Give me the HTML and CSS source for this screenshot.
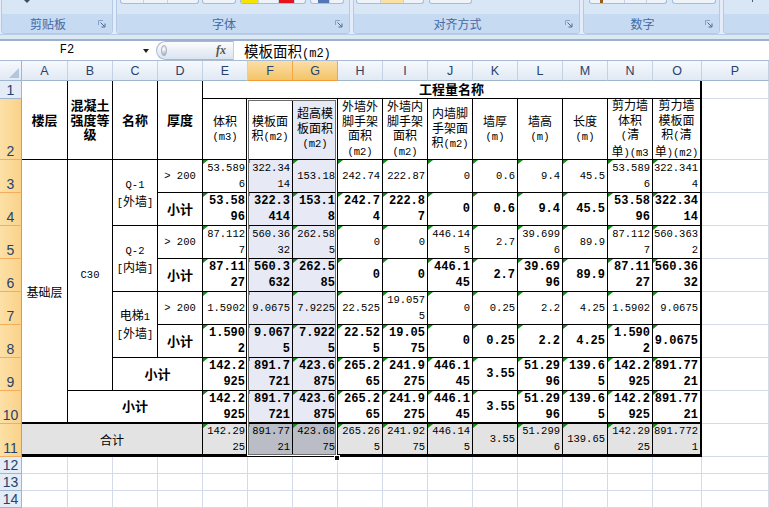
FILE: index.html
```html
<!DOCTYPE html>
<html lang="zh-CN">
<head>
<meta charset="utf-8">
<title>Sheet</title>
<link rel="stylesheet" href="styles.css">
</head>
<body>
<div class="ribbon">
  <div class="group g1">
    <div class="tops"><span class="tri"></span></div>
    <div class="band"><span class="glabel">剪贴板</span><span class="launch"><svg width="8" height="8" viewBox="0 0 8 8"><path d="M0.5 5V0.5H5" fill="none" stroke="#8aa2c4"/><path d="M2.5 2.5L6.5 6.5M7 3.5V7H3.5" fill="none" stroke="#4d6b98"/></svg></span></div>
  </div>
  <div class="group g2">
    <div class="tops">
      <span class="pc a1"><i class="w22"></i><i class="w24"></i><i></i></span>
      <span class="pc a2"><i></i></span>
      <span class="pc a3"><i class="yel"></i><i class="w20"></i><i class="red"></i><i></i></span>
      <span class="pc a4"><i class="w7"></i><i class="blu"></i><i></i></span>
    </div>
    <div class="band"><span class="glabel">字体</span><span class="launch"><svg width="8" height="8" viewBox="0 0 8 8"><path d="M0.5 5V0.5H5" fill="none" stroke="#8aa2c4"/><path d="M2.5 2.5L6.5 6.5M7 3.5V7H3.5" fill="none" stroke="#4d6b98"/></svg></span></div>
  </div>
  <div class="group g3">
    <div class="tops">
      <span class="pc b1"><i class="w23"></i><i class="org"></i><i></i></span>
      <span class="pc b2"><i></i></span>
    </div>
    <div class="band"><span class="glabel">对齐方式</span><span class="launch"><svg width="8" height="8" viewBox="0 0 8 8"><path d="M0.5 5V0.5H5" fill="none" stroke="#8aa2c4"/><path d="M2.5 2.5L6.5 6.5M7 3.5V7H3.5" fill="none" stroke="#4d6b98"/></svg></span></div>
  </div>
  <div class="group g4">
    <div class="tops">
      <span class="pc d1"><i class="w34"><b class="brn"></b></i><i class="w22"></i><i></i></span>
      <span class="pc d2"><i></i></span>
    </div>
    <div class="band"><span class="glabel">数字</span><span class="launch"><svg width="8" height="8" viewBox="0 0 8 8"><path d="M0.5 5V0.5H5" fill="none" stroke="#8aa2c4"/><path d="M2.5 2.5L6.5 6.5M7 3.5V7H3.5" fill="none" stroke="#4d6b98"/></svg></span></div>
  </div>
  <div class="group g5">
    <div class="tops"><span class="dot"></span></div>
    <div class="band"></div>
  </div>
</div>
<div class="sepband"></div>
<div class="fbar">
  <div class="namebox"><span class="nbtext">F2</span><span class="dd"></span></div>
  <div class="pill"><span class="bead"></span><span class="fx">fx</span></div>
  <div class="ftext">模板面积<span class="fu">(m2)</span></div>
</div>

<div class="sheet">
  <div class="ch corner"><svg width="10" height="10" viewBox="0 0 10 10"><polygon points="10,0 10,10 0,10" fill="#b4c6dc"/></svg></div>
  <div class="ch">A</div><div class="ch">B</div><div class="ch">C</div><div class="ch">D</div><div class="ch">E</div>
  <div class="ch on">F</div><div class="ch on">G</div>
  <div class="ch">H</div><div class="ch">I</div><div class="ch">J</div><div class="ch">K</div><div class="ch">L</div><div class="ch">M</div><div class="ch">N</div><div class="ch">O</div><div class="ch">P</div>

  <!-- row 1 -->
  <div class="rh">1</div>
  <div class="c hb rs2"><span class="in">楼层</span></div>
  <div class="c hb rs2"><span class="in">混凝土<br>强度等<br>级</span></div>
  <div class="c hb rs2"><span class="in">名称</span></div>
  <div class="c hb rs2"><span class="in">厚度</span></div>
  <div class="c hb cs11 lastc"><span class="in">工程量名称</span></div>
  <div class="g"></div>

  <!-- row 2 -->
  <div class="rh on">2</div>
  <div class="c h"><span class="in">体积<br><span class="u">(m3)</span></span></div>
  <div class="c h"><span class="in">模板面<br>积<span class="u">(m2)</span></span></div>
  <div class="c h s"><span class="in">超高模<br>板面积<br><span class="u">(m2)</span></span></div>
  <div class="c h"><span class="in">外墙外<br>脚手架<br>面积<br><span class="u">(m2)</span></span></div>
  <div class="c h"><span class="in">外墙内<br>脚手架<br>面积<br><span class="u">(m2)</span></span></div>
  <div class="c h"><span class="in">内墙脚<br>手架面<br>积<span class="u">(m2)</span></span></div>
  <div class="c h"><span class="in">墙厚<br><span class="u">(m)</span></span></div>
  <div class="c h"><span class="in">墙高<br><span class="u">(m)</span></span></div>
  <div class="c h"><span class="in">长度<br><span class="u">(m)</span></span></div>
  <div class="c h"><span class="in">剪力墙<br>体积<br><span class="u">(</span>清<br>单<span class="u">)(m3</span></span></div>
  <div class="c h lastc"><span class="in">剪力墙<br>模板面<br>积<span class="u">(</span>清<br>单<span class="u">)(m2)</span></span></div>
  <div class="g"></div>

  <!-- row 3 -->
  <div class="rh on">3</div>
  <div class="c lbl rs8 r10"><span class="in">基础层</span></div>
  <div class="c lat rs7"><span class="in">C30</span></div>
  <div class="c lbl rs2"><span class="in"><span class="u">Q-1</span><br><span class="u">[</span>外墙<span class="u">]</span></span></div>
  <div class="c lat"><span class="in">&gt; 200</span></div>
  <div class="c n"><span class="in">53.589<br>6</span></div>
  <div class="c n s f"><span class="in">322.34<br>14</span></div>
  <div class="c n s"><span class="in">153.18</span></div>
  <div class="c n"><span class="in">242.74</span></div>
  <div class="c n"><span class="in">222.87</span></div>
  <div class="c n"><span class="in">0</span></div>
  <div class="c n"><span class="in">0.6</span></div>
  <div class="c n"><span class="in">9.4</span></div>
  <div class="c n"><span class="in">45.5</span></div>
  <div class="c n"><span class="in">53.589<br>6</span></div>
  <div class="c n lastc"><span class="in">322.341<br>4</span></div>
  <div class="g"></div>

  <!-- row 4 -->
  <div class="rh on">4</div>
  <div class="c hb"><span class="in">小计</span></div>
  <div class="c nb"><span class="in">53.58<br>96</span></div>
  <div class="c nb s f"><span class="in">322.3<br>414</span></div>
  <div class="c nb s"><span class="in">153.1<br>8</span></div>
  <div class="c nb"><span class="in">242.7<br>4</span></div>
  <div class="c nb"><span class="in">222.8<br>7</span></div>
  <div class="c nb"><span class="in">0</span></div>
  <div class="c nb"><span class="in">0.6</span></div>
  <div class="c nb"><span class="in">9.4</span></div>
  <div class="c nb"><span class="in">45.5</span></div>
  <div class="c nb"><span class="in">53.58<br>96</span></div>
  <div class="c nb lastc"><span class="in">322.34<br>14</span></div>
  <div class="g"></div>

  <!-- row 5 -->
  <div class="rh on">5</div>
  <div class="c lbl rs2"><span class="in"><span class="u">Q-2</span><br><span class="u">[</span>内墙<span class="u">]</span></span></div>
  <div class="c lat"><span class="in">&gt; 200</span></div>
  <div class="c n"><span class="in">87.112<br>7</span></div>
  <div class="c n s f"><span class="in">560.36<br>32</span></div>
  <div class="c n s"><span class="in">262.58<br>5</span></div>
  <div class="c n"><span class="in">0</span></div>
  <div class="c n"><span class="in">0</span></div>
  <div class="c n"><span class="in">446.14<br>5</span></div>
  <div class="c n"><span class="in">2.7</span></div>
  <div class="c n"><span class="in">39.699<br>6</span></div>
  <div class="c n"><span class="in">89.9</span></div>
  <div class="c n"><span class="in">87.112<br>7</span></div>
  <div class="c n lastc"><span class="in">560.363<br>2</span></div>
  <div class="g"></div>

  <!-- row 6 -->
  <div class="rh on">6</div>
  <div class="c hb"><span class="in">小计</span></div>
  <div class="c nb"><span class="in">87.11<br>27</span></div>
  <div class="c nb s f"><span class="in">560.3<br>632</span></div>
  <div class="c nb s"><span class="in">262.5<br>85</span></div>
  <div class="c nb"><span class="in">0</span></div>
  <div class="c nb"><span class="in">0</span></div>
  <div class="c nb"><span class="in">446.1<br>45</span></div>
  <div class="c nb"><span class="in">2.7</span></div>
  <div class="c nb"><span class="in">39.69<br>96</span></div>
  <div class="c nb"><span class="in">89.9</span></div>
  <div class="c nb"><span class="in">87.11<br>27</span></div>
  <div class="c nb lastc"><span class="in">560.36<br>32</span></div>
  <div class="g"></div>

  <!-- row 7 -->
  <div class="rh on">7</div>
  <div class="c lbl rs2"><span class="in">电梯<span class="u">1</span><br><span class="u">[</span>外墙<span class="u">]</span></span></div>
  <div class="c lat"><span class="in">&gt; 200</span></div>
  <div class="c n"><span class="in">1.5902</span></div>
  <div class="c n s f"><span class="in">9.0675</span></div>
  <div class="c n s"><span class="in">7.9225</span></div>
  <div class="c n"><span class="in">22.525</span></div>
  <div class="c n"><span class="in">19.057<br>5</span></div>
  <div class="c n"><span class="in">0</span></div>
  <div class="c n"><span class="in">0.25</span></div>
  <div class="c n"><span class="in">2.2</span></div>
  <div class="c n"><span class="in">4.25</span></div>
  <div class="c n"><span class="in">1.5902</span></div>
  <div class="c n lastc"><span class="in">9.0675</span></div>
  <div class="g"></div>

  <!-- row 8 -->
  <div class="rh on">8</div>
  <div class="c hb"><span class="in">小计</span></div>
  <div class="c nb"><span class="in">1.590<br>2</span></div>
  <div class="c nb s f"><span class="in">9.067<br>5</span></div>
  <div class="c nb s"><span class="in">7.922<br>5</span></div>
  <div class="c nb"><span class="in">22.52<br>5</span></div>
  <div class="c nb"><span class="in">19.05<br>75</span></div>
  <div class="c nb"><span class="in">0</span></div>
  <div class="c nb"><span class="in">0.25</span></div>
  <div class="c nb"><span class="in">2.2</span></div>
  <div class="c nb"><span class="in">4.25</span></div>
  <div class="c nb"><span class="in">1.590<br>2</span></div>
  <div class="c nb lastc"><span class="in">9.0675</span></div>
  <div class="g"></div>

  <!-- row 9 -->
  <div class="rh on">9</div>
  <div class="c hb cs2"><span class="in">小计</span></div>
  <div class="c nb"><span class="in">142.2<br>925</span></div>
  <div class="c nb s f"><span class="in">891.7<br>721</span></div>
  <div class="c nb s"><span class="in">423.6<br>875</span></div>
  <div class="c nb"><span class="in">265.2<br>65</span></div>
  <div class="c nb"><span class="in">241.9<br>275</span></div>
  <div class="c nb"><span class="in">446.1<br>45</span></div>
  <div class="c nb"><span class="in">3.55</span></div>
  <div class="c nb"><span class="in">51.29<br>96</span></div>
  <div class="c nb"><span class="in">139.6<br>5</span></div>
  <div class="c nb"><span class="in">142.2<br>925</span></div>
  <div class="c nb lastc"><span class="in">891.77<br>21</span></div>
  <div class="g"></div>

  <!-- row 10 -->
  <div class="rh on">10</div>
  <div class="c hb cs3 r10"><span class="in">小计</span></div>
  <div class="c nb r10"><span class="in">142.2<br>925</span></div>
  <div class="c nb r10 s f"><span class="in">891.7<br>721</span></div>
  <div class="c nb r10 s"><span class="in">423.6<br>875</span></div>
  <div class="c nb r10"><span class="in">265.2<br>65</span></div>
  <div class="c nb r10"><span class="in">241.9<br>275</span></div>
  <div class="c nb r10"><span class="in">446.1<br>45</span></div>
  <div class="c nb r10"><span class="in">3.55</span></div>
  <div class="c nb r10"><span class="in">51.29<br>96</span></div>
  <div class="c nb r10"><span class="in">139.6<br>5</span></div>
  <div class="c nb r10"><span class="in">142.2<br>925</span></div>
  <div class="c nb r10 lastc"><span class="in">891.77<br>21</span></div>
  <div class="g"></div>

  <!-- row 11 -->
  <div class="rh on">11</div>
  <div class="c lbl cs4 tot"><span class="in">合计</span></div>
  <div class="c n tot"><span class="in">142.29<br>25</span></div>
  <div class="c n tot s f"><span class="in">891.77<br>21</span></div>
  <div class="c n tot s"><span class="in">423.68<br>75</span></div>
  <div class="c n tot"><span class="in">265.26<br>5</span></div>
  <div class="c n tot"><span class="in">241.92<br>75</span></div>
  <div class="c n tot"><span class="in">446.14<br>5</span></div>
  <div class="c n tot"><span class="in">3.55</span></div>
  <div class="c n tot"><span class="in">51.299<br>6</span></div>
  <div class="c n tot"><span class="in">139.65</span></div>
  <div class="c n tot"><span class="in">142.29<br>25</span></div>
  <div class="c n tot lastc"><span class="in">891.772<br>1</span></div>
  <div class="g"></div>

  <!-- rows 12-14 -->
  <div class="rh">12</div>
  <div class="g"></div><div class="g"></div><div class="g"></div><div class="g"></div><div class="g"></div><div class="g"></div><div class="g"></div><div class="g"></div>
  <div class="g"></div><div class="g"></div><div class="g"></div><div class="g"></div><div class="g"></div><div class="g"></div><div class="g"></div><div class="g"></div>
  <div class="rh">13</div>
  <div class="g"></div><div class="g"></div><div class="g"></div><div class="g"></div><div class="g"></div><div class="g"></div><div class="g"></div><div class="g"></div>
  <div class="g"></div><div class="g"></div><div class="g"></div><div class="g"></div><div class="g"></div><div class="g"></div><div class="g"></div><div class="g"></div>
  <div class="rh">14</div>
  <div class="g"></div><div class="g"></div><div class="g"></div><div class="g"></div><div class="g"></div><div class="g"></div><div class="g"></div><div class="g"></div>
  <div class="g"></div><div class="g"></div><div class="g"></div><div class="g"></div><div class="g"></div><div class="g"></div><div class="g"></div><div class="g"></div>

  <div class="selbox"></div>
  <div class="handle"></div>
</div>
</body>
</html>
```

FILE: styles.css
```css
* { box-sizing: border-box; }
html, body { margin: 0; padding: 0; }
body {
  width: 769px;
  height: 508px;
  overflow: hidden;
  background: #fff;
  font-family: "Noto Sans CJK SC", sans-serif;
  color: #000;
}

/* ---------- ribbon ---------- */
.ribbon {
  height: 35px;
  display: flex;
  gap: 3px;
  padding-left: 1px;
  background: #e3ecf8;
  border-bottom: 1px solid #b9cde7;
}
.group {
  display: flex;
  flex-direction: column;
  border: 1px solid #b3c9e5;
  border-top: 0;
  border-radius: 0 0 4px 4px;
  background: #d9e6f6;
  overflow: hidden;
}
.g1 { width: 112px; }
.g2 { width: 234px; }
.g3 { width: 227px; }
.g4 { width: 137px; }
.g5 { flex: 1; border-right: 0; border-radius: 0 0 0 4px; }
.tops { height: 14px; display: flex; align-items: flex-start; }
.band {
  height: 19px;
  display: flex;
  align-items: center;
  background: #c6daf1;
}
.glabel {
  flex: 1;
  text-align: center;
  font-size: 12px;
  line-height: 19px;
  color: #4569a6;
}
.launch { width: 18px; padding-left: 4px; display: flex; align-items: center; }
.tri {
  margin-left: 22px;
  width: 0; height: 0;
  border-top: 3px solid #3b4c66;
  border-left: 3px solid transparent;
  border-right: 3px solid transparent;
}
.pc {
  height: 4px;
  display: flex;
  border: 1px solid #a5bcda;
  border-top: 0;
  border-radius: 0 0 3px 3px;
  background: #eef3fa;
  overflow: hidden;
}
.pc i { flex: 1; border-left: 1px solid #c3d3e8; }
.pc i:first-child { border-left: 0; }
.pc i.w7 { flex: 0 0 7px; }
.pc i.w20 { flex: 0 0 20px; }
.pc i.w22 { flex: 0 0 22px; }
.pc i.w23 { flex: 0 0 23px; }
.pc i.w24 { flex: 0 0 24px; }
.pc i.w34 { flex: 0 0 34px; }
.pc i.yel { flex: 0 0 17px; background: #f6e400; }
.pc i.red { flex: 0 0 16px; background: #e5141b; }
.pc i.blu { flex: 0 0 11px; background: #5276b6; border-left: 0; }
.pc i.org { flex: 0 0 23px; background: #fbe2a4; }
.pc i b.brn { display: block; margin-left: 10px; width: 3px; height: 3px; background: #9a5a1c; }
.a1 { margin-left: 3px; width: 79px; }
.a2 { margin-left: 3px; width: 34px; }
.a3 { margin-left: 4px; width: 66px; }
.a4 { margin-left: 4px; width: 34px; }
.b1 { margin-left: 2px; width: 68px; }
.b2 { margin-left: 5px; width: 43px; }
.d1 { margin-left: 5px; width: 78px; }
.d2 { margin-left: 5px; width: 44px; }
.dot { margin-left: 28px; width: 1px; height: 2px; background: #4b5a70; }

.sepband { height: 4px; background: #dde8f5; }

/* ---------- formula bar ---------- */
.fbar {
  height: 22px;
  display: flex;
  background: #fff;
  border-top: 2px solid #9bb1cd;
  border-bottom: 1px solid #a9bcd4;
}
.namebox { width: 156px; display: flex; align-items: center; }
.nbtext {
  width: 134px;
  text-align: center;
  font-family: "Liberation Mono", monospace;
  font-size: 12px;
  line-height: 19px;
}
.dd {
  margin-left: 9px;
  width: 0; height: 0;
  border-top: 4px solid #222;
  border-left: 3px solid transparent;
  border-right: 3px solid transparent;
}
.pill {
  width: 78px;
  height: 19px;
  display: flex;
  align-items: center;
  justify-content: space-between;
  padding: 0 7px 0 4px;
  border: 1px solid #a7b9d1;
  border-right-color: #c3cfdf;
  border-radius: 10px 0 0 10px;
  background: linear-gradient(#fbfcfe, #dbe4f0);
}
.bead {
  width: 6px;
  height: 11px;
  border-radius: 50%;
  background: radial-gradient(circle at 40% 35%, #ffffff, #9aa7b8);
  border: 1px solid #a9b4c3;
}
.fx {
  font-family: "Liberation Serif", serif;
  font-style: italic;
  font-weight: 700;
  font-size: 12px;
  color: #555;
}
.ftext {
  flex: 1;
  padding-left: 10px;
  font-size: 14.5px;
  line-height: 19px;
}
.fu { font-family: "Liberation Mono", monospace; font-size: 12px; }

/* ---------- sheet ---------- */
.sheet {
  position: relative;
  display: grid;
  grid-template-columns: 22px 46px repeat(13, 45px) 49px 67px;
  grid-template-rows: 20px 18px 61px repeat(9, 33px) repeat(3, 17px);
}
.ch {
  display: flex;
  align-items: center;
  justify-content: center;
  font-family: "Liberation Sans", Arial, sans-serif;
  font-size: 12.5px;
  color: #27426b;
  background: linear-gradient(#f6f9fd, #e1e9f4);
  border-right: 1px solid #c2d1e4;
  border-bottom: 1px solid #9eb6ce;
}
.ch.on {
  background: linear-gradient(#fbdfa6, #f3c469);
  border-right-color: #f2a746;
  border-bottom-color: #f29a36;
}
.corner { justify-content: flex-end; align-items: flex-end; padding: 0 2px 2px 0; border-right-color: #9eb6ce; }
.rh {
  display: flex;
  align-items: flex-end;
  justify-content: center;
  padding-bottom: 1px;
  font-family: "Liberation Sans", Arial, sans-serif;
  font-size: 14px;
  line-height: 14px;
  color: #27426b;
  background: #e4ecf7;
  border-right: 1px solid #9eb6ce;
  border-bottom: 1px solid #9eb6ce;
}
.rh.on {
  background: linear-gradient(90deg, #fde0a6, #f9d28a);
  border-right-color: #f29436;
  border-bottom-color: #f3ad5c;
}
.g {
  border-right: 1px solid #d3dbe8;
  border-bottom: 1px solid #d3dbe8;
}
.c {
  position: relative;
  display: flex;
  align-items: center;
  justify-content: center;
  text-align: center;
  overflow: hidden;
  background: #fff;
  border-right: 1px solid #000;
  border-bottom: 1px solid #000;
}
.in { display: block; white-space: nowrap; }
.rs2 { grid-row: span 2; }
.rs7 { grid-row: span 7; }
.rs8 { grid-row: span 8; }
.cs2 { grid-column: span 2; }
.cs3 { grid-column: span 3; }
.cs4 { grid-column: span 4; }
.cs11 { grid-column: span 11; }
.lastc { border-right-width: 2px; }
.r10 { border-bottom-width: 2px; }
.tot { background: #e3e3e3; border-bottom-width: 3px; }
.s { background: #e7e9f4; }
.s.tot { background: #babdc6; }

.hb { font-size: 13px; font-weight: 700; line-height: 14.5px; }
.h { font-size: 12px; line-height: 14.5px; }
.lbl { font-size: 12px; line-height: 15px; }
.lat { font-family: "Liberation Mono", monospace; font-size: 10.5px; }
.u { font-family: "Liberation Mono", monospace; font-size: 10.5px; }

.n, .nb {
  justify-content: flex-end;
  text-align: right;
  padding-right: 2px;
  font-family: "Liberation Mono", monospace;
  line-height: 16px;
}
.n { font-size: 10.5px; }
.nb { font-size: 12px; font-weight: 700; }
.n::before, .nb::before {
  content: "";
  position: absolute;
  left: 0;
  top: 0;
  width: 0;
  height: 0;
  border-top: 4px solid #13891a;
  border-right: 5px solid transparent;
}
.f::before {
  left: 1px;
  width: 1px;
  height: 3px;
  border: 0;
  background: #d95ad9;
}

.selbox {
  position: absolute;
  left: 246px;
  top: 37px;
  width: 92px;
  height: 359px;
  border: 1px solid #000;
  box-shadow: inset 0 0 0 1px #fff, inset 0 0 0 2px #6e6e6e;
}
.handle {
  position: absolute;
  left: 334px;
  top: 394px;
  width: 6px;
  height: 6px;
  background: #000;
  border: 1px solid #fff;
}
```
